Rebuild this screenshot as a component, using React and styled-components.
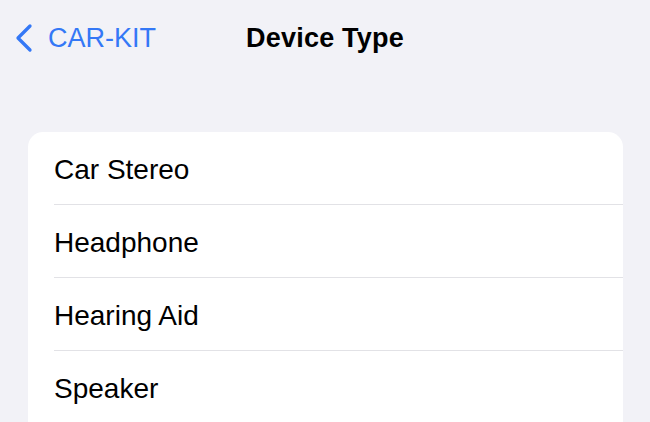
import React from "react";
import styled, { createGlobalStyle } from "styled-components";

const Global = createGlobalStyle`
  html, body { margin: 0; padding: 0; background: #f2f2f7; }
  body { font-family: "Liberation Sans", Arial, sans-serif; -webkit-font-smoothing: antialiased; }
`;

const Page = styled.div`
  width: 650px;
  height: 422px;
  overflow: hidden;
  background: #f2f2f7;
`;

const NavBar = styled.div`
  position: relative;
  height: 76px;
  display: flex;
  align-items: center;
  justify-content: center;
`;

const Back = styled.div`
  position: absolute;
  left: 14px;
  top: 0;
  height: 76px;
  display: flex;
  align-items: center;
  gap: 14px;
  color: #3478f6;
  font-size: 27px;
`;

const Title = styled.div`
  font-size: 27px;
  font-weight: 700;
  color: #000;
  letter-spacing: 0.2px;
`;

const Card = styled.div`
  margin: 56px 27px 0 28px;
  background: #fff;
  border-radius: 15px 15px 0 0;
  overflow: hidden;
`;

const Row = styled.div`
  height: 73px;
  display: flex;
  align-items: center;
  padding-top: 3px;
  margin-left: 26px;
  font-size: 28px;
  color: #000;
  box-sizing: border-box;
  border-bottom: ${(p) => (p.last ? "none" : "1px solid #e2e2e6")};
`;

const items = ["Car Stereo", "Headphone", "Hearing Aid", "Speaker"];

export default function App() {
  return (
    <Page>
      <Global />
      <NavBar>
        <Back>
          <svg width="20" height="30" viewBox="0 0 20 30" fill="none">
            <path d="M16 3 L4 15 L16 27" stroke="#3478f6" strokeWidth="3.3" strokeLinecap="round" strokeLinejoin="round" />
          </svg>
          <span>CAR-KIT</span>
        </Back>
        <Title>Device Type</Title>
      </NavBar>
      <Card>
        {items.map((t, i) => (
          <Row key={t} last={i === items.length - 1}>{t}</Row>
        ))}
      </Card>
    </Page>
  );
}
